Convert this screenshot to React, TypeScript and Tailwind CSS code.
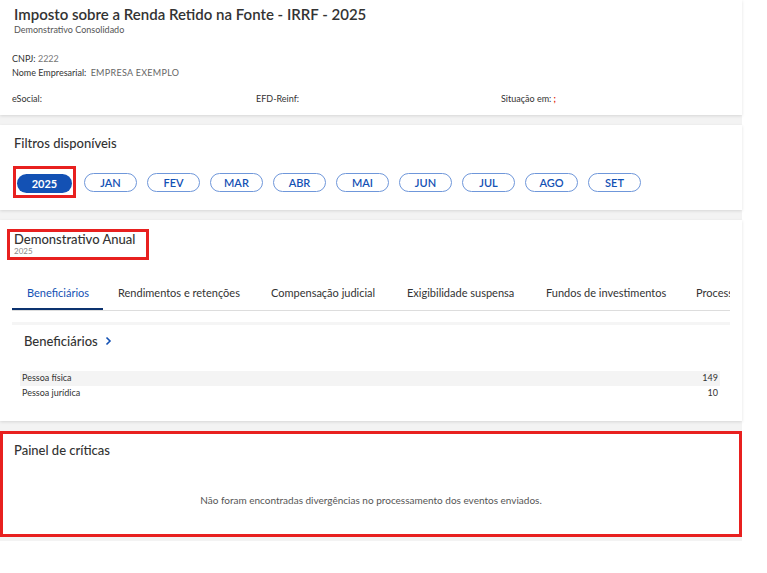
const months = ["JAN", "FEV", "MAR", "ABR", "MAI", "JUN", "JUL", "AGO", "SET"];
const tabs = [
  { label: "Beneficiários", w: "w-[91px]" },
  { label: "Rendimentos e retenções", w: "w-[153px]" },
  { label: "Compensação judicial", w: "w-[136px]" },
  { label: "Exigibilidade suspensa", w: "w-[139px]" },
  { label: "Fundos de investimentos", w: "w-[150px]" },
  { label: "Processos", w: "w-[80px]" },
];

function Card({ className = "", children }: { className?: string; children: React.ReactNode }) {
  return <section className={`bg-white shadow-[0_1px_3px_rgba(0,0,0,0.12)] ${className}`}>{children}</section>;
}

export default function App() {
  return (
    <main className="min-h-screen bg-white text-[#333] font-['Lato','Open_Sans',sans-serif]">
      <div className="w-[742px] bg-[#f3f3f3] flex flex-col gap-[10px] pb-[4px]">
        <Card className="h-[115px] px-[12px] pt-[4px]">
          <h1 className="text-[15px] leading-[20px] font-semibold pl-[2px]">
            Imposto sobre a Renda Retido na Fonte - IRRF - 2025
          </h1>
          <p className="text-[9px] leading-[12px] text-[#555] pl-[2px]">Demonstrativo Consolidado</p>
          <div className="mt-[16px] text-[9px] leading-[14px]">
            <p>
              CNPJ: <span className="text-[#777]">2222</span>
            </p>
            <p>
              Nome Empresarial: <span className="text-[#666] ml-[2px] tracking-[0.3px]">EMPRESA EXEMPLO</span>
            </p>
          </div>
          <div className="mt-[12px] grid grid-cols-[244px_245px_1fr] text-[9px] leading-[14px]">
            <span>eSocial:</span>
            <span>EFD-Reinf:</span>
            <span>
              Situação em: <span className="text-[#e52207] font-bold">;</span>
            </span>
          </div>
        </Card>

        <Card className="h-[85px] px-[14px] pt-[9px]">
          <h2 className="text-[13px] leading-[18px] font-medium">Filtros disponíveis</h2>
          <div className="mt-[14px] flex items-center">
            <div className="border-[3px] border-[#e8201f] p-[1px] mr-[8px] -ml-[1px]">
              <button className="w-[55px] h-[19px] rounded-full bg-[#1351b4] text-white text-[11px] font-bold leading-none">
                2025
              </button>
            </div>
            <div className="flex gap-[10px]">
              {months.map((m) => (
                <button
                  key={m}
                  className="w-[53px] h-[19px] rounded-full border border-[#6f97da] text-[#1351b4] text-[11px] font-semibold leading-none"
                >
                  {m}
                </button>
              ))}
            </div>
          </div>
        </Card>

        <Card className="h-[201px] px-[12px] pt-[9px] overflow-hidden">
          <div className="border-[3px] border-[#e8201f] w-[142px] h-[31px] -ml-[5px] pl-[4px]">
            <h2 className="text-[13px] leading-[15px] font-medium">Demonstrativo Anual</h2>
            <p className="text-[8px] leading-[9px] text-[#888]">2025</p>
          </div>
          <div className="mt-[25px] w-[718px] flex border-b border-[#ddd] text-[11px] whitespace-nowrap overflow-hidden">
            {tabs.map((t, i) => (
              <div
                key={t.label}
                className={`shrink-0 pl-[15px] pb-[6px] ${t.w} ${
                  i === 0 ? "text-[#1351b4] border-b-[3px] border-[#0c326f] -mb-px" : "text-[#333]"
                }`}
              >
                {t.label}
              </div>
            ))}
          </div>
          <div className="mt-[11px] h-[3px] w-[718px] bg-[#f5f5f5]" />
          <h3 className="mt-[7px] ml-[12px] text-[13px] leading-[18px] font-medium flex items-center gap-[7px]">
            Beneficiários
            <svg width="7" height="10" viewBox="0 0 7 10" fill="none">
              <path d="M1.5 1.5 5 5l-3.5 3.5" stroke="#1351b4" strokeWidth="1.6" />
            </svg>
          </h3>
          <div className="mt-[21px] ml-[8px] w-[700px] text-[9px]">
            <div className="flex justify-between items-center h-[15px] bg-[#f4f4f4] pl-[2px] pr-[2px]">
              <span>Pessoa física</span>
              <span>149</span>
            </div>
            <div className="flex justify-between items-center h-[15px] pl-[2px] pr-[2px]">
              <span>Pessoa jurídica</span>
              <span>10</span>
            </div>
          </div>
        </Card>

        <section className="h-[106px] bg-white border-[3px] border-[#e8201f] px-[11px] pt-[7px]">
          <h2 className="text-[13px] leading-[18px] font-medium">Painel de críticas</h2>
          <p className="mt-[34px] text-center text-[10px] text-[#555]">
            Não foram encontradas divergências no processamento dos eventos enviados.
          </p>
        </section>
      </div>
    </main>
  );
}
